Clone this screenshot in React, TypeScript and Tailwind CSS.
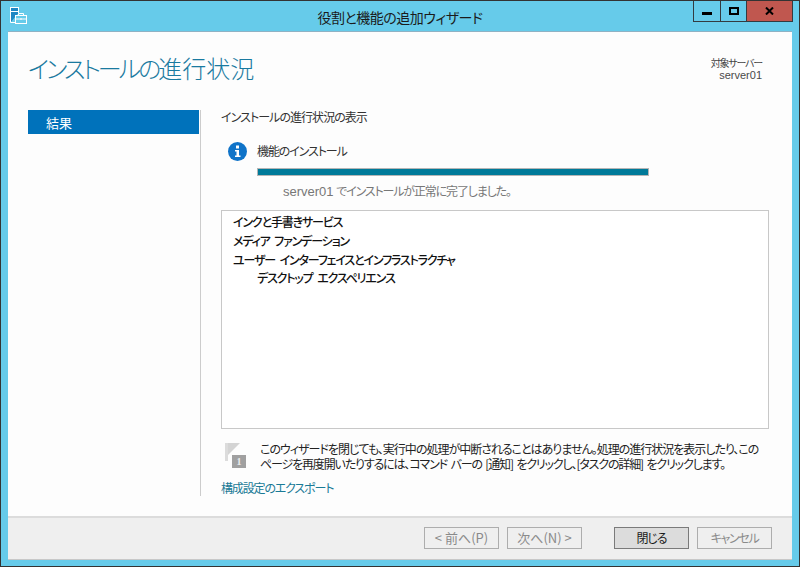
const jp = "font-['Noto_Sans_CJK_JP','Liberation_Sans',sans-serif] [font-feature-settings:'palt']";

const WizardButton = ({ label, active, className }: { label: string; active?: boolean; className?: string }) => (
	<button
		className={`block w-[75px] h-[22px] border leading-[18px] ${
			active
				? "border-[#7a7a7a] bg-[#dcdcdc] text-[#1a1a1a]"
				: "border-[#adadad] bg-[#efefef] text-[#8a8a8a]"
		} ${className}`}
	>
		{label}
	</button>
);

const ServerIcon = () => (
	<svg width="18" height="18" viewBox="0 0 18 18" fill="none" stroke="white" strokeWidth="1">
		<path d="M0.5 15.5V0.5H8.5V6" fill="#1e87c4" />
		<rect x="0.5" y="0.5" width="8" height="4" fill="#1e87c4" />
		<path d="M0.5 15.5H5" />
		<rect x="5.5" y="8.5" width="11" height="8" fill="#66cbea" />
		<path d="M8.5 8V6.5H13.5V8" />
		<path d="M5.5 12H16.5" />
		<path d="M11 11V13" />
	</svg>
);

const InfoIcon = () => (
	<svg width="19" height="19" viewBox="0 0 19 19">
		<circle cx="9.5" cy="9.5" r="9.5" fill="#0f73c8" />
		<rect x="8" y="3.5" width="3" height="3" fill="white" />
		<path d="M7 8H11V13.5H12.5V15H7V13.5H8.5V9.5H7Z" fill="white" />
	</svg>
);

const FlagIcon = () => (
	<div className="relative w-[21px] h-[25px] shrink-0">
		<svg width="15" height="19" viewBox="0 0 15 19" className="block">
			<rect x="0" y="0" width="3" height="18" fill="#dcdcdc" />
			<path d="M3 0H15L3 12Z" fill="#d4d4d4" />
		</svg>
		<div className="absolute left-[7px] top-[12px] w-[14px] h-[13px] bg-[#a0a0a0] text-[#ececec] text-[10px] leading-[13px] text-center font-bold font-['Liberation_Serif',serif]">
			1
		</div>
	</div>
);

export default function App() {
	return (
		<div className={`w-[800px] h-[567px] border border-[#333333] bg-[#66cbea] flex flex-col overflow-hidden ${jp}`}>
			<div className="h-[30px] shrink-0 grid grid-cols-[1fr_auto_1fr]">
				<div className="pl-[9px] pt-[6px]">
					<ServerIcon />
				</div>
				<div className="text-[14px] leading-[32px] tracking-[-0.5px] text-[#1b1b1b]">役割と機能の追加ウィザード</div>
				<div className="flex justify-end items-start pr-[6px]">
					<div className="flex h-[21px] border border-t-0 border-[#333b40]">
						<div className="w-[27px] flex items-center justify-center border-r border-[#333b40]">
							<div className="w-[10px] h-[3px] bg-black mt-[4px]" />
						</div>
						<div className="w-[26px] flex items-center justify-center border-r border-[#333b40]">
							<div className="w-[10px] h-[8px] border-2 border-black" />
						</div>
						<div className="w-[45px] flex items-center justify-center bg-[#c0574f]">
							<svg width="9" height="8" viewBox="0 0 9 8" stroke="black" strokeWidth="2">
								<path d="M1 0.5L8 7.5M8 0.5L1 7.5" />
							</svg>
						</div>
					</div>
				</div>
			</div>
			<div className="flex-1 mx-[7px] mb-[7px] min-h-0 flex flex-col bg-white border-t border-[#8fb2c4] shadow-[0_1px_0_#c8c8c8]">
				<div className="flex-1 bg-[#fdfdfd] flex flex-col min-h-0">
					<div className="h-[78px] shrink-0 flex justify-between pl-[20px] pr-[30px]">
						<div className="text-[24px] leading-[32px] pt-[20px] text-[#1a7aa0] font-light">
							<span className="tracking-[-3px]">インストールの</span>
							<span>進行状況</span>
						</div>
						<div className="pt-[24px] text-right text-[10px] leading-[13px] text-[#444444]">
							<div className="tracking-[-1.2px]">対象サーバー</div>
							<div className="text-[11px] text-[#4a4a4a] font-['Liberation_Sans',sans-serif]">server01</div>
						</div>
					</div>
					<div className="flex-1 flex pl-[20px] pr-[23px] min-h-0">
						<div className="w-[172px] h-[386px] shrink-0">
							<div className="w-[171px] h-[24px] bg-[#0072bb] pl-[18px] text-[13px] leading-[25px] text-white">結果</div>
						</div>
						<div className="w-px h-[386px] bg-[#cccccc] shrink-0" />
						<div className="flex-1 min-w-0 pl-[20px] flex flex-col h-[386px]">
							<div className="text-[12px] leading-[14px] pb-[2px] tracking-[-0.95px] text-[#333333]">インストールの進行状況の表示</div>
							<div className="flex pl-[7px] mt-[9px] gap-[10px] shrink-0">
								<div className="pt-[7px]">
									<InfoIcon />
								</div>
								<div className="flex flex-col">
									<div className="text-[12px] leading-[16px] tracking-[-1.1px] pt-[8px] text-[#333333]">機能のインストール</div>
									<div className="w-[392px] h-[8px] mt-[9px] border border-[#b5b5b5] bg-[#007a99]" />
									<div className="pl-[26px] mt-[7px] text-[12px] leading-[16px] text-[#777777]">
										<span className="text-[13px] font-['Liberation_Sans',sans-serif]">server01</span>{" "}
										<span className="tracking-[-1.15px]">でインストールが正常に完了しました。</span>
									</div>
								</div>
							</div>
							<div className="mt-[10px] h-[219px] shrink-0 border border-[#c8c8c8] bg-white pl-[11px] pt-[1px] text-[12px] tracking-[-1.15px] [word-spacing:3px] text-[#111111] font-medium">
								<div className="h-[19px] leading-[19px]">インクと手書きサービス</div>
								<div className="h-[19px] leading-[20px]">メディア ファンデーション</div>
								<div className="h-[19px] leading-[20px]">ユーザー インターフェイスとインフラストラクチャ</div>
								<div className="h-[19px] leading-[18px] pl-[24px]">デスクトップ エクスペリエンス</div>
							</div>
							<div className="flex mt-[14px] pl-[4px] gap-[14px] shrink-0">
								<FlagIcon />
								<div className="-mt-[2px] text-[12px] leading-[15px] tracking-[-1px] text-[#222222] flex-1 min-w-0 whitespace-nowrap">
									このウィザードを閉じても、実行中の処理が中断されることはありません。処理の進行状況を表示したり、この
									<br />
									<span className="tracking-[-1.15px] [word-spacing:2px]">ページを再度開いたりするには、コマンド バーの [通知] をクリックし、[タスクの詳細] をクリックします。</span>
								</div>
							</div>
							<div className="mt-[9px] text-[12px] leading-[16px] tracking-[-1.15px] text-[#1a7a96]">構成設定のエクスポート</div>
						</div>
					</div>
				</div>
				<div className="h-[43px] shrink-0 bg-[#efefef] border-t-2 border-[#dcdcdc] flex items-start justify-end pt-[9px] pr-[20px]">
					<WizardButton label="< 前へ(P)" className="text-[13px]" />
					<WizardButton label="次へ(N) >" className="ml-[8px] text-[13px]" />
					<WizardButton label="閉じる" active className="ml-[32px] text-[12px] tracking-[-1px]" />
					<WizardButton label="キャンセル" className="ml-[8px] text-[12px] tracking-[-1.3px]" />
				</div>
			</div>
		</div>
	);
}
